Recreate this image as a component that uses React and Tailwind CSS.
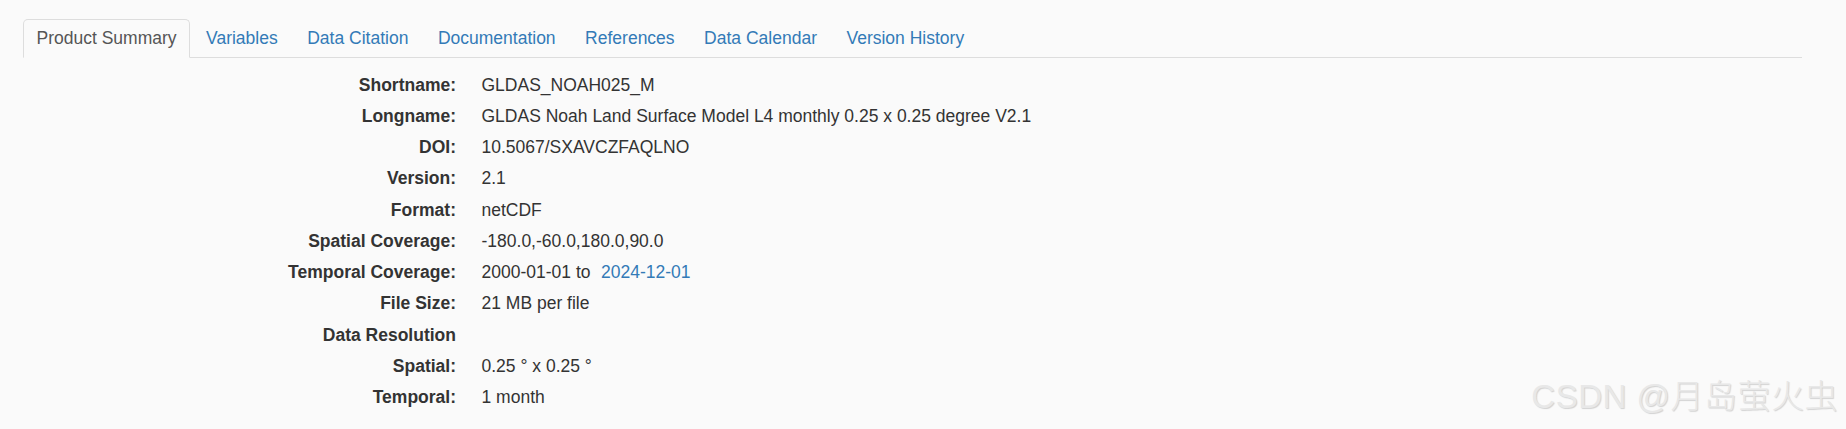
import React from "react";

const tabs = [
  "Product Summary",
  "Variables",
  "Data Citation",
  "Documentation",
  "References",
  "Data Calendar",
  "Version History",
];

const rows = [
  ["Shortname:", "GLDAS_NOAH025_M"],
  ["Longname:", "GLDAS Noah Land Surface Model L4 monthly 0.25 x 0.25 degree V2.1"],
  ["DOI:", "10.5067/SXAVCZFAQLNO"],
  ["Version:", "2.1"],
  ["Format:", "netCDF"],
  ["Spatial Coverage:", "-180.0,-60.0,180.0,90.0"],
  ["Temporal Coverage:", "TEMPORAL"],
  ["File Size:", "21 MB per file"],
  ["Data Resolution", ""],
  ["Spatial:", "0.25 ° x 0.25 °"],
  ["Temporal:", "1 month"],
];

export default function App() {
  return (
    <div
      className="relative w-full h-[429px] bg-[#fafafa] text-[#333] text-[17.5px] overflow-hidden"
      style={{ fontFamily: '"Liberation Sans", Arial, sans-serif' }}
    >
      <div className="ml-[23px] w-[1779px] pt-[19px]">
        <ul className="flex border-b border-[#ddd]">
          {tabs.map((t, i) => (
            <li key={t} className="-mb-px mr-[2.5px]">
              <a
                className={
                  "block px-[12.5px] py-[6px] leading-[25px] border rounded-t-[5px] " +
                  (i === 0
                    ? "border-[#ddd] border-b-[#fafafa] bg-[#fafafa] text-[#555]"
                    : "border-transparent text-[#337ab7]")
                }
              >
                {t}
              </a>
            </li>
          ))}
        </ul>
        <div className="mt-[11.5px]">
          {rows.map(([k, v]) => (
            <div key={k} className="flex leading-[31.25px]">
              <div className="w-[433px] shrink-0 text-right font-bold">{k}</div>
              <div className="ml-[25.5px] whitespace-pre">
                {v === "TEMPORAL" ? (
                  <>
                    2000-01-01 to
                    <a className="ml-[10.5px] text-[#337ab7]">2024-12-01</a>
                  </>
                ) : (
                  v
                )}
              </div>
            </div>
          ))}
        </div>
      </div>
      <div
        className="absolute right-[8px] bottom-[16px] text-[33px] leading-none font-light text-[#e8e8e8] tracking-[0.5px]"
        style={{
          fontFamily: '"Liberation Sans", "Noto Sans CJK SC", sans-serif',
          textShadow: "1px 1px 1px rgba(0,0,0,0.16)",
        }}
      >
        CSDN @月岛萤火虫
      </div>
    </div>
  );
}
